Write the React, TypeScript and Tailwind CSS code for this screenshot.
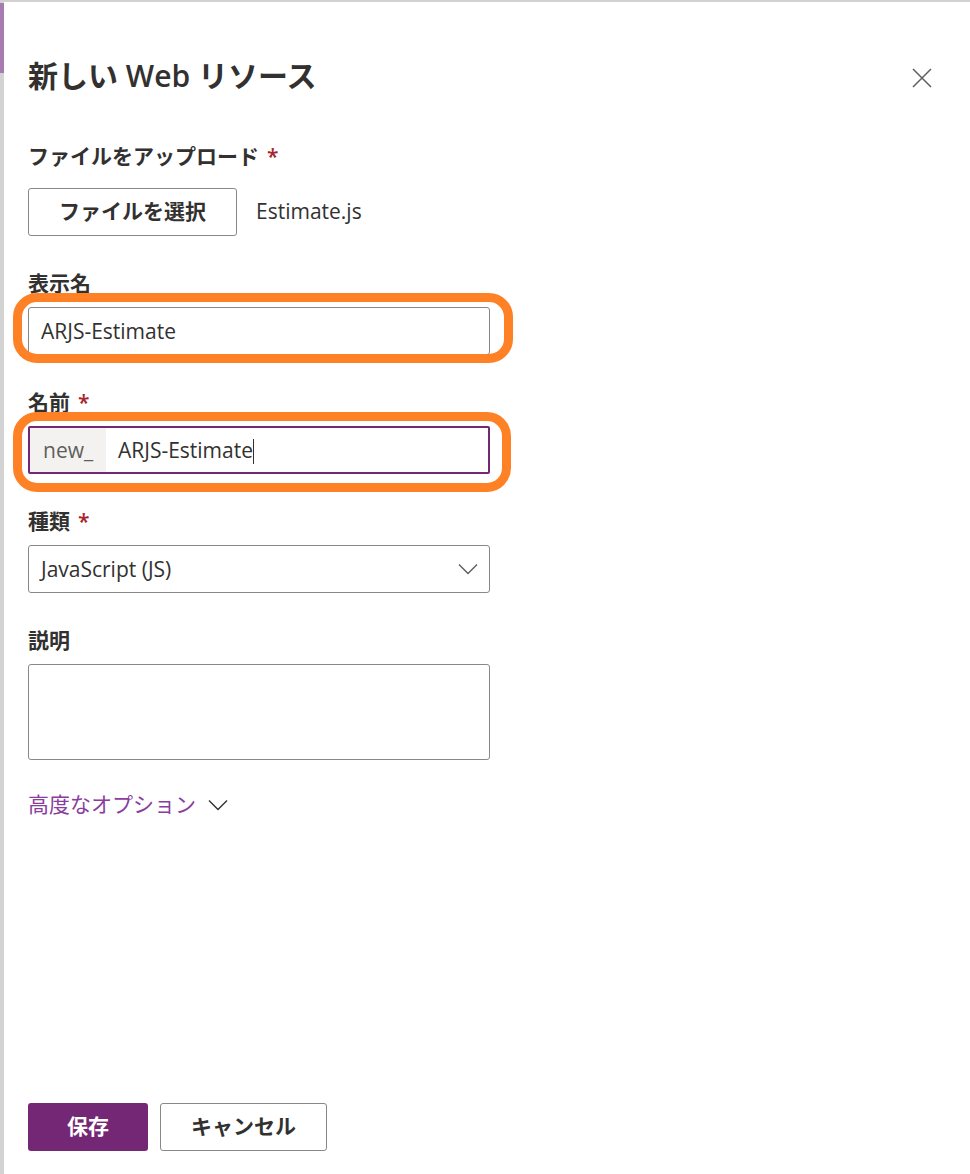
import React from "react";

const font = "font-['Open_Sans','Noto_Sans_CJK_JP',sans-serif]";

const Required = () => <span className="text-[#a4262c] pl-[8px]">*</span>;

const FieldLabel = ({ text, required }: { text: string; required?: boolean }) => (
  <div className="pt-[6px] pb-[9px] text-[21px] leading-[30px] font-semibold text-[#323130]">
    {text}
    {required && <Required />}
  </div>
);

const Highlight = ({ className }: { className: string }) => (
  <div
    className={`pointer-events-none absolute border-[9px] border-[#fe8126] rounded-[24px] ${className}`}
  />
);

const ChevronDown = ({ className }: { className?: string }) => (
  <svg width="20" height="12" viewBox="0 0 20 12" className={className}>
    <polyline
      points="1,1.5 10,10.5 19,1.5"
      fill="none"
      stroke="currentColor"
      strokeWidth="1.4"
    />
  </svg>
);

const App = () => {
  return (
    <div className={`${font} h-[1174px] w-[970px] flex flex-col bg-white text-[#323130]`}>
      <div className="h-[2px] bg-[#d1d1d1]" />
      <div className="flex flex-1">
        {/* background page peeking out on the left */}
        <div className="w-[4px] shrink-0 flex flex-col bg-[#d3d3d3]">
          <div className="mt-[1px] h-[70px] bg-[#a77bb0]" />
        </div>

        <div className="flex-1 flex flex-col pl-[24px]">
          <div className="mt-[54px] flex items-center justify-between">
            <h1 className="text-[30px] leading-[40px] font-semibold">新しい Web リソース</h1>
            <button className="mr-[33px] mt-[4px] w-[30px] h-[30px] flex items-center justify-center text-[#605e5c]">
              <svg width="20" height="20" viewBox="0 0 20 20">
                <path d="M1 1 L19 19 M19 1 L1 19" stroke="currentColor" strokeWidth="1.5" />
              </svg>
            </button>
          </div>

          <div className="mt-[39px]">
            <FieldLabel text="ファイルをアップロード" required />
            <div className="mt-[8px] flex items-center">
              <button className="h-[48px] w-[209px] border border-[#8a8886] rounded-[3px] text-[21px] font-semibold">
                ファイルを選択
              </button>
              <span className="ml-[19px] text-[21px]">Estimate.js</span>
            </div>
          </div>

          <div className="mt-[26px] w-[462px]">
            <FieldLabel text="表示名" />
            <div className="relative">
              <div className="h-[48px] border border-[#8a8886] rounded-[3px] flex items-center px-[12px] pt-[2px] text-[21px]">
                ARJS-Estimate
              </div>
              <Highlight className="left-[-15px] top-[-14px] right-[-23px] bottom-[-8px]" />
            </div>
          </div>

          <div className="mt-[26px] w-[462px]">
            <FieldLabel text="名前" required />
            <div className="relative">
              <div className="h-[48px] border-2 border-[#742774] rounded-[2px] flex items-stretch text-[21px]">
                <div className="w-[76px] bg-[#f3f2f1] text-[#605e5c] pl-[13px] pt-[2px] flex items-center">new_</div>
                <div className="flex items-center pl-[12px] pt-[2px]">
                  ARJS-Estimate
                  <span className="w-[1px] h-[25px] bg-[#323130]" />
                </div>
              </div>
              <Highlight className="left-[-15px] top-[-14px] right-[-21px] bottom-[-18px]" />
            </div>
          </div>

          <div className="mt-[26px] w-[462px]">
            <FieldLabel text="種類" required />
            <div className="h-[48px] border border-[#8a8886] rounded-[3px] flex items-center justify-between pl-[12px] pr-[11px] text-[21px]">
              <span className="pt-[2px]">JavaScript (JS)</span>
              <ChevronDown className="text-[#605e5c]" />
            </div>
          </div>

          <div className="mt-[26px] w-[462px]">
            <FieldLabel text="説明" />
            <div className="h-[96px] border border-[#8a8886] rounded-[3px]" />
          </div>

          <div className="mt-[29px] flex items-center text-[21px] leading-[30px] text-[#8a3d9c]">
            <span>高度なオプション</span>
            <ChevronDown className="ml-[12px] mt-[2px] text-[#323130]" />
          </div>

          <div className="flex-1" />

          <div className="mb-[23px] flex gap-[12px]">
            <button className="h-[48px] w-[120px] bg-[#742774] text-white rounded-[3px] text-[21px] font-semibold">
              保存
            </button>
            <button className="h-[48px] w-[167px] border border-[#8a8886] rounded-[3px] text-[21px] font-semibold">
              キャンセル
            </button>
          </div>
        </div>
      </div>
    </div>
  );
};

export default App;
